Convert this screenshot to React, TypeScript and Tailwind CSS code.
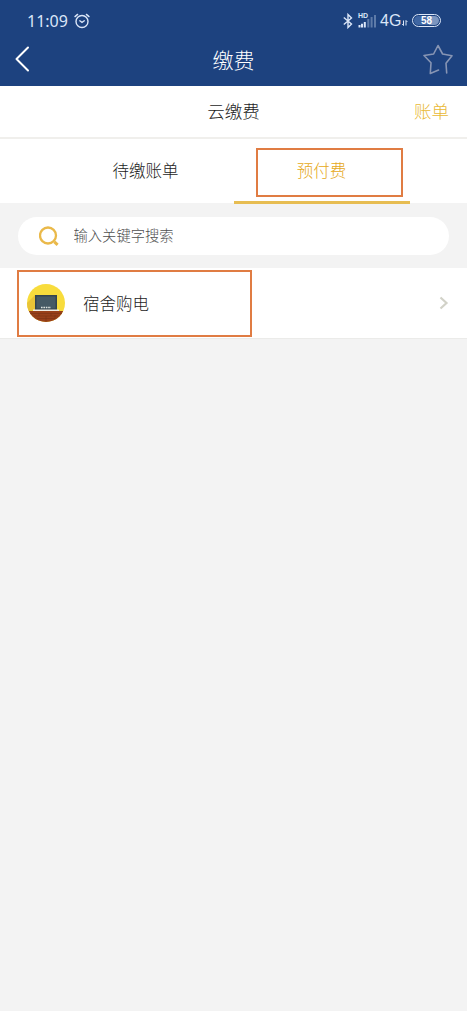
import { useState } from 'react'

const TABS = ['待缴账单', '预付费']

function StatusBar() {
  return (
    <div className="flex h-10 items-center pl-[27px] pr-[26px] pt-[1px] text-[#dbe6f8]">
      <span className="w-[41px] whitespace-nowrap pt-px font-['Noto_Sans','Noto_Sans_CJK_SC',sans-serif] text-[16px] font-normal leading-5">11:09</span>
      <svg className="ml-[6px]" width="16" height="16" viewBox="0 0 16 16" fill="none" stroke="currentColor" strokeWidth="1.4" strokeLinecap="round">
        <circle cx="8" cy="8.5" r="6" />
        <path d="M5.8 7.8 8 9.4l2.3-1.6M1 3.6l2.6-2.2M15 3.6l-2.6-2.2" />
      </svg>

      <div className="ml-auto flex items-center">
        <svg width="10" height="16" viewBox="0 0 10 16" fill="none" stroke="currentColor" strokeWidth="1.4">
          <path d="M.8 4.5 8.5 11 5 14.5v-13L8.5 5 .8 11.5" />
        </svg>
        <div className="ml-[5px] flex h-[16px] w-[20px] flex-col">
          <span className="h-[7px] font-['Liberation_Sans',sans-serif] text-[7px] font-bold leading-[5px]">HD</span>
          <svg className="-mt-[6px] shrink-0" width="19" height="14" viewBox="0 0 19 14" fill="currentColor">
            <path d="M.5 11h2v2.5h-2zM3 9.8h2v3.7H3zM5.8 8h2v5.5h-2z" />
            <path d="M9.3 5h2v8.5h-2zM12.6 3h2v10.5h-2zM16 1h2v12.5h-2z" opacity=".35" />
          </svg>
        </div>
        <span className="ml-[2px] w-[22px] font-['Liberation_Sans',sans-serif] text-[16px] font-normal leading-5">4G</span>
        <svg className="mt-[5px]" width="6" height="6" viewBox="0 0 6 6" fill="none" stroke="currentColor">
          <path d="M1.5.5v5L.3 4M4 5.5v-5L5.4 2" />
        </svg>
        <div className="ml-[4px] h-[13px] w-[29px] rounded-full border-[1.5px] border-[#dbe6f8] p-px">
          <div className="flex h-full items-center justify-center rounded-full bg-linear-to-r from-[#3f66a3] from-60% to-[#7b95bf] to-60% font-['Liberation_Sans',sans-serif] text-[10px] font-bold leading-none text-white">
            58
          </div>
        </div>
      </div>
    </div>
  )
}

function NavBar() {
  return (
    <div className="grid h-[46px] grid-cols-3 items-center pb-[8px]">
      <button className="ml-[15px] w-4">
        <svg width="16" height="26" viewBox="0 0 16 26" fill="none" stroke="white" strokeWidth="2" strokeLinecap="round" strokeLinejoin="round">
          <path d="M13 1.5 1.5 13 13 24.5" />
        </svg>
      </button>
      <h1 className="text-center text-[21px] leading-none text-white">缴费</h1>
      <button className="mr-[14px] justify-self-end">
        <svg width="30" height="31" viewBox="0 0 30 31" fill="none" stroke="#8795b4" strokeWidth="1.6" strokeLinecap="round" strokeLinejoin="round">
          <path d="M15.5 26 7.3 29.5 8 18.8 1 11.5 10.6 10 15 1.5l4.6 8.5 9.4 1.7-6 7.5.7 9.8" />
        </svg>
      </button>
    </div>
  )
}

function RoomIcon() {
  return (
    <svg width="38" height="38" viewBox="0 0 38 38">
      <defs>
        <clipPath id="disc">
          <circle cx="19" cy="19" r="19" />
        </clipPath>
      </defs>
      <g clipPath="url(#disc)">
        <path fill="#f8dc3c" d="M0 0h38v38H0z" />
        <path fill="#e9c437" d="M8 11 0 19v8h8z" />
        <path fill="#34454e" d="M8 11h22v15H8z" />
        <path fill="#465a65" d="M9.5 12.5h19v12h-19z" />
        <path stroke="#dfe4e0" strokeWidth="1.6" strokeDasharray="1.6 .8" d="M14 23.5h10" />
        <path fill="#f1eee4" d="M6 25.5h26V27H6z" />
        <path fill="#984019" d="M0 27h38v11H0z" />
        <path stroke="#7b3214" strokeWidth=".6" d="M0 29.5h38M7 32h24M10 34.5h18M12 29v3M24 29v3M19 32v5M28 31v4" />
      </g>
    </svg>
  )
}

export default function App() {
  const [activeTab, setActiveTab] = useState('预付费')
  const [keyword, setKeyword] = useState('')

  return (
    <div className="min-h-screen bg-[#f3f3f3] font-['Noto_Sans_CJK_SC',sans-serif] font-light text-[#1c1c1c]">
      {/* Header */}
      <header className="h-[86px] bg-[#1d427f]">
        <StatusBar />
        <NavBar />
      </header>

      <div className="grid h-[53px] grid-cols-3 items-center border-b-2 border-[#f0efec] bg-white pb-[2px]">
        <h2 className="col-start-2 text-center text-[17.5px] leading-none">云缴费</h2>
        <button className="justify-self-end pr-[18px] text-[17.5px] leading-none text-[#e9b935]">账单</button>
      </div>

      {/* Tabs */}
      <nav className="flex h-[64px] justify-center bg-white">
        {TABS.map((tab) => (
          <button
            key={tab}
            onClick={() => setActiveTab(tab)}
            className={`relative w-[176px] pb-[2px] text-[16.5px] leading-none ${
              activeTab === tab ? 'text-[#e6a920]' : 'text-[#1c1c1c]'
            }`}
          >
            {tab}
            {activeTab === tab && (
              <>
                <span className="absolute -bottom-px left-0 h-[3px] w-full bg-[#e7bd52]" />
                <span className="absolute left-[22px] top-[9px] h-[49px] w-[147px] border-2 border-[#e07c43]" />
              </>
            )}
          </button>
        ))}
      </nav>

      {/* Search */}
      <div className="h-[65px] px-[18px] pt-[14px]">
        <label className="flex h-[38px] items-center rounded-full bg-white pl-[21px]">
          <svg width="20" height="20" viewBox="0 0 20 20" fill="none" stroke="#eab94a" strokeWidth="2.3">
            <circle cx="9" cy="9.5" r="8" />
            <path d="m15.4 15.8 3.2 3" strokeWidth="3" />
          </svg>
          <input
            value={keyword}
            onChange={(e) => setKeyword(e.target.value)}
            placeholder="输入关键字搜索"
            className="ml-[14.5px] flex-1 pb-[2px] text-[14.3px] font-light outline-none placeholder:text-[#4f4f4f]"
          />
        </label>
      </div>

      {/* Payment items */}
      <button className="relative flex h-[71px] w-full items-center border-b border-[#ebebe9] bg-white pl-[27px] pr-[18px]">
        <RoomIcon />
        <span className="ml-[18px] text-[16.5px] leading-none">宿舍购电</span>
        <svg className="ml-auto" width="10" height="14" viewBox="0 0 10 14" fill="none" stroke="#d2d2c8" strokeWidth="2.2">
          <path d="m1.5 1.5 6 5.5-6 5.5" />
        </svg>
        <span className="absolute left-[17px] top-[2px] h-[67px] w-[235px] border-2 border-[#e07c43]" />
      </button>
    </div>
  )
}
